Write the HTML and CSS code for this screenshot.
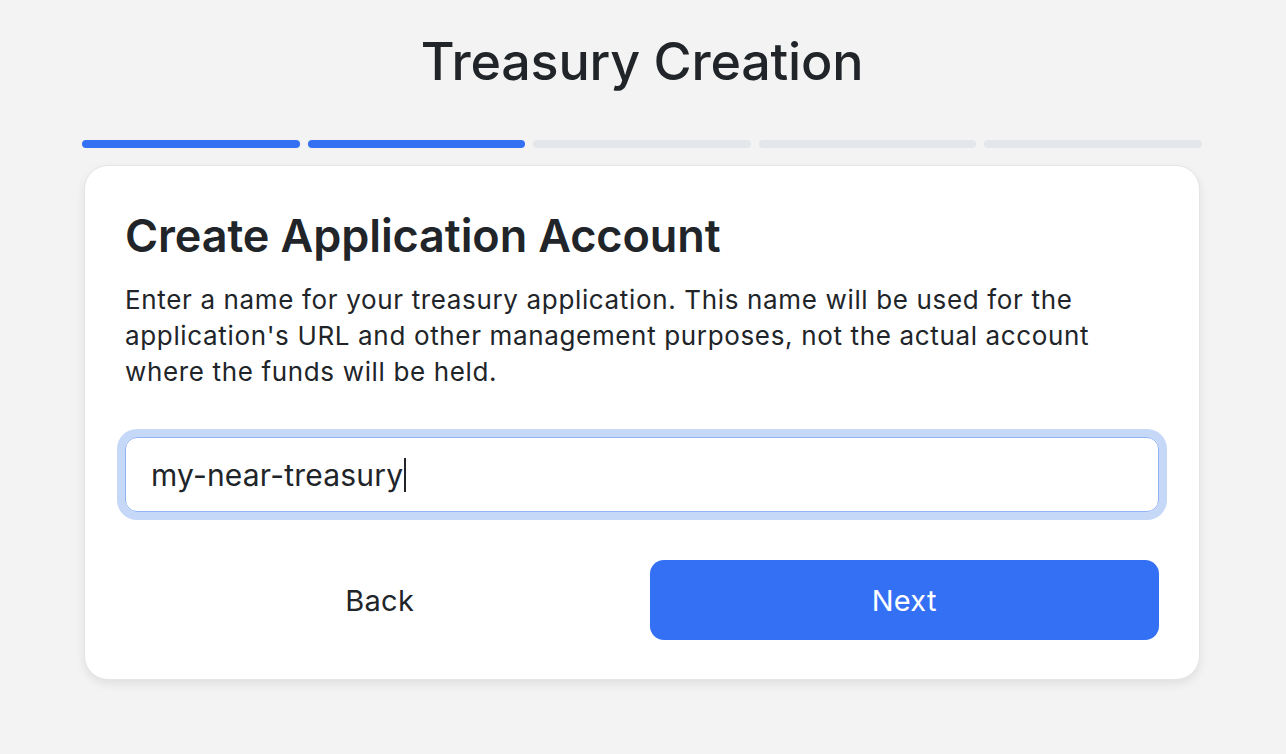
FILE: index.html
```html
<!DOCTYPE html>
<html lang="en">
<head>
<meta charset="utf-8">
<title>Treasury Creation</title>
<link rel="stylesheet" href="styles.css">
</head>
<body>
<main class="page">
  <h1 class="title">Treasury Creation</h1>
  <div class="steps">
    <span class="step active"></span>
    <span class="step active"></span>
    <span class="step"></span>
    <span class="step"></span>
    <span class="step"></span>
  </div>
  <section class="card">
    <h2 class="card-title">Create Application Account</h2>
    <p class="card-text">Enter a name for your treasury application. This name will be used for the application's URL and other management purposes, not the actual account where the funds will be held.</p>
    <div class="field">
      <div class="input"><span class="value">my-near-treasury</span><span class="caret"></span></div>
    </div>
    <div class="actions">
      <button class="btn btn-back">Back</button>
      <button class="btn btn-next">Next</button>
    </div>
  </section>
</main>
</body>
</html>
```

FILE: styles.css
```css
* { box-sizing: border-box; }
html, body { margin: 0; padding: 0; }
body {
  background: #f3f3f3;
  font-family: Inter, "Noto Sans", sans-serif;
  color: #212529;
  width: 1286px;
  height: 754px;
  overflow: hidden;
}
.page {
  width: 1120px;
  margin: 0 0 0 82px;
  padding-top: 26px;
  display: flex;
  flex-direction: column;
}
.title {
  margin: 0;
  text-align: center;
  font-size: 52px;
  font-weight: 500;
  line-height: 72px;
  letter-spacing: -0.2px;
  color: #212529;
}
.steps {
  display: flex;
  gap: 8px;
  margin-top: 42px;
}
.step {
  flex: 1;
  height: 8px;
  border-radius: 4px;
  background: #e3e6eb;
}
.step.active { background: #3470f4; }
.card {
  margin: 17px 2px 0;
  background: #fff;
  border: 1px solid #e3e5e9;
  border-radius: 24px;
  box-shadow: 0 4px 10px rgba(0,0,0,0.08);
  padding: 42px 40px 39px;
  display: flex;
  flex-direction: column;
}
.card-title {
  margin: 0;
  font-size: 45px;
  font-weight: 600;
  line-height: 56px;
  letter-spacing: -0.1px;
}
.card-text {
  margin: 18px 0 0;
  font-size: 26px;
  line-height: 36px;
  letter-spacing: 0.65px;
}
.field {
  margin-top: 47px;
}
.input {
  height: 75px;
  border: 1px solid #8fb3f5;
  border-radius: 12px;
  box-shadow: 0 0 0 8px #c6d8f8;
  display: flex;
  align-items: center;
  padding: 0 25px;
  font-size: 30px;
  letter-spacing: 0.2px;
  color: #212529;
}
.caret {
  width: 2px;
  height: 34px;
  background: #212529;
  margin-left: 1px;
}
.actions {
  margin-top: 48px;
  display: flex;
  gap: 15px;
}
.btn {
  flex: 1;
  height: 80px;
  border: none;
  border-radius: 14px;
  font-family: inherit;
  font-size: 29px;
  font-weight: 400;
  letter-spacing: 0.3px;
  background: transparent;
  color: #212529;
}
.btn-next {
  background: #3470f4;
  color: #fff;
}
```
